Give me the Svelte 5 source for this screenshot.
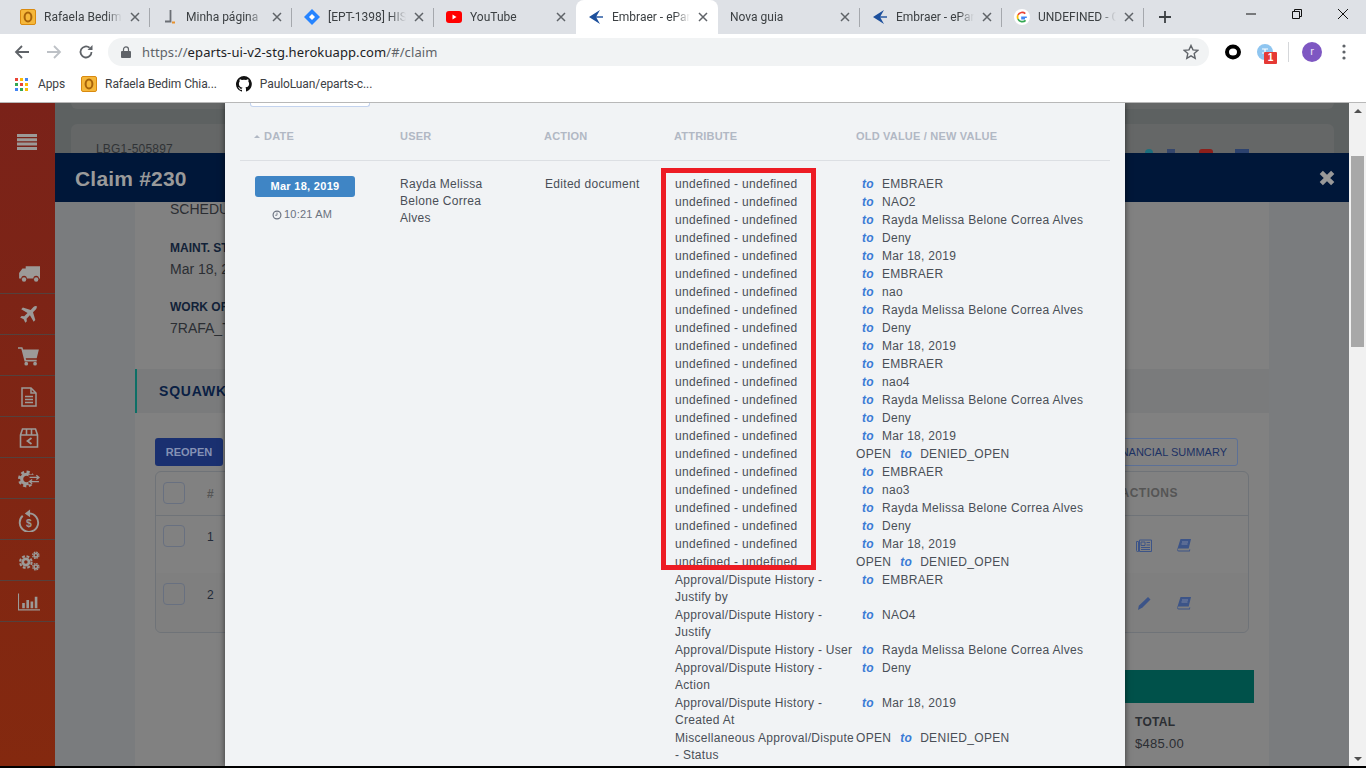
<script>
  const tabs = [
    { title: "Rafaela Bedim Chiarelli", icon: "outlook" },
    { title: "Minha página", icon: "j" },
    { title: "[EPT-1398] HISTORY", icon: "jira" },
    { title: "YouTube", icon: "yt" },
    { title: "Embraer - eParts", icon: "emb", active: true },
    { title: "Nova guia", icon: "" },
    { title: "Embraer - eParts", icon: "emb" },
    { title: "UNDEFINED - Google", icon: "g" },
  ];

  const rayda = "Rayda Melissa Belone Correa Alves";
  const und = "undefined - undefined";
  const denied = { attr: und, old: "OPEN", val: "DENIED_OPEN" };

  function group(second) {
    return [
      { attr: und, val: "EMBRAER" },
      { attr: und, val: second },
      { attr: und, val: rayda },
      { attr: und, val: "Deny" },
      { attr: und, val: "Mar 18, 2019" },
    ];
  }

  const changes = [
    ...group("NAO2"),
    ...group("nao"),
    ...group("nao4"),
    denied,
    ...group("nao3"),
    denied,
    { attr: "Approval/Dispute History - Justify by", val: "EMBRAER" },
    { attr: "Approval/Dispute History - Justify", val: "NAO4" },
    { attr: "Approval/Dispute History - User", val: rayda },
    { attr: "Approval/Dispute History - Action", val: "Deny" },
    { attr: "Approval/Dispute History - Created At", val: "Mar 18, 2019" },
    { attr: "Miscellaneous Approval/Dispute - Status", old: "OPEN", val: "DENIED_OPEN" },
  ];

  const apps = ["#ea4335", "#fbbc05", "#4285f4", "#34a853", "#ea4335", "#fbbc05", "#4285f4", "#34a853", "#fbbc05"];
</script>

{#snippet favicon(name)}
  {#if name === "outlook"}
    <svg class="fav" viewBox="0 0 16 16"><rect x="0.5" y="0.5" width="15" height="15" rx="1.5" fill="#f5b73a" stroke="#d98a10" /><ellipse cx="8" cy="8" rx="3.4" ry="4.6" fill="none" stroke="#a8640a" stroke-width="2" /></svg>
  {:else if name === "j"}
    <svg class="fav" viewBox="0 0 16 16"><path d="M8.500 1v11.500H3" fill="none" stroke="#6b6f75" stroke-width="1.800" /><rect x="10" y="12.500" width="3" height="2" fill="#e8912d" /></svg>
  {:else if name === "jira"}
    <svg class="fav" viewBox="0 0 16 16"><path d="M8 0l8 8-8 8-8-8z" fill="#2684ff" /><path d="M8 5l3 3-3 3-3-3z" fill="#fff" /></svg>
  {:else if name === "yt"}
    <svg class="fav" viewBox="0 0 16 16"><rect y="2" width="16" height="12" rx="3" fill="#f00" /><path d="M6.500 5.500l4 2.500-4 2.500z" fill="#fff" /></svg>
  {:else if name === "emb"}
    <svg class="fav" viewBox="0 0 16 16"><path d="M12 1L1 8l11 7-4-7z" fill="#1c4f9c" /><path d="M6 7.300h9v1.400H6z" fill="#1c4f9c" /></svg>
  {:else if name === "g"}
    <svg class="fav" viewBox="0 0 16 16"><circle cx="8" cy="8" r="8" fill="#fff" /><path d="M12.800 8.200H8v1.600h3" fill="none" stroke="#4285f4" stroke-width="1.600" /><path d="M11.300 4.600A4.800 4.800 0 0 0 4 5.900" fill="none" stroke="#ea4335" stroke-width="1.700" /><path d="M4 5.900a4.800 4.800 0 0 0 0 4.200" fill="none" stroke="#fbbc05" stroke-width="1.700" /><path d="M4 10.100a4.800 4.800 0 0 0 7.600 1.200" fill="none" stroke="#34a853" stroke-width="1.700" /></svg>
  {/if}
{/snippet}

{#snippet book()}
  <svg viewBox="0 0 14 13"><path d="M3.500 0H14l-2.300 9.500H1.800a1 1 0 0 0 0 2h10.400l.3-1.300.8.300-.5 2H1.800C.5 12.500 0 11.500.3 10.300z" fill="#3c5488" /><path d="M5 3h6M4.500 5h6" stroke="#8a93a8" stroke-width=".8" /></svg>
{/snippet}

<div class="screen">
  <header class="browser">
    <div class="tabstrip">
      <div class="tabs">
        {#each tabs as tab, i}
          <div class="tab" class:active={tab.active} class:nosep={tab.active || tabs[i + 1]?.active || i === 3}>
            {#if tab.icon}{@render favicon(tab.icon)}{/if}
            <span class="tab-title">{tab.title}</span>
            <svg class="tab-x" viewBox="0 0 10 10"><path d="M1 1l8 8M9 1L1 9" stroke="#5f6368" stroke-width="1.500" /></svg>
          </div>
        {/each}
      </div>
      <svg class="newtab" viewBox="0 0 12 12"><path d="M6 0v12M0 6h12" stroke="#3c4043" stroke-width="1.800" /></svg>
      <div class="winctl">
        <svg viewBox="0 0 10 10"><path d="M0 5h10" stroke="#111" /></svg>
        <svg viewBox="0 0 10 10"><path d="M.5 2.500h7v7h-7zM2.500 2.500v-2h7v7h-2" fill="none" stroke="#111" /></svg>
        <svg viewBox="0 0 10 10"><path d="M0 0l10 10M10 0L0 10" stroke="#111" /></svg>
      </div>
    </div>

    <div class="toolbar">
      <svg class="nav" viewBox="0 0 16 16"><path d="M15 8H2M8 2L2 8l6 6" fill="none" stroke="#5f6368" stroke-width="1.800" /></svg>
      <svg class="nav" viewBox="0 0 16 16"><path d="M1 8h13M8 2l6 6-6 6" fill="none" stroke="#bdc1c6" stroke-width="1.800" /></svg>
      <svg class="nav" viewBox="0 0 16 16"><path d="M13.500 8A5.500 5.500 0 1 1 11.600 3.800" fill="none" stroke="#5f6368" stroke-width="1.800" /><path d="M14.500 1v5h-5z" fill="#5f6368" /></svg>
      <div class="omnibox">
        <svg class="lock" viewBox="0 0 10 12"><path d="M2.500 5V3.400a2.500 2.500 0 0 1 5 0V5" fill="none" stroke="#5f6368" stroke-width="1.200" /><rect y="5" width="10" height="7" rx="1" fill="#5f6368" /></svg>
        <span class="url"><span>https://</span><b>eparts-ui-v2-stg.herokuapp.com</b><span>/#/claim</span></span>
        <svg class="star" viewBox="0 0 16 16"><path d="M8 1.500l2 4.400 4.700.5-3.500 3.200 1 4.700L8 11.900l-4.200 2.400 1-4.700L1.300 6.400 6 5.900z" fill="none" stroke="#5f6368" stroke-width="1.400" /></svg>
      </div>
      <div class="ext">
        <svg class="ring" viewBox="0 0 16 16"><ellipse cx="8" cy="8" rx="6" ry="5.500" fill="none" stroke="#000" stroke-width="4" /></svg>
        <div class="tr-ext">
          <svg viewBox="0 0 16 16"><circle cx="8" cy="8" r="8" fill="#8ec5f0" /><path d="M5 5h6M8 5v7M5 9h6" stroke="#fff" stroke-width="1.200" /></svg>
          <span class="ext-badge">1</span>
        </div>
        <i class="ext-sep"></i>
        <span class="avatar">r</span>
        <svg class="kebab" viewBox="0 0 4 16"><circle cx="2" cy="2" r="1.600" /><circle cx="2" cy="8" r="1.600" /><circle cx="2" cy="14" r="1.600" /></svg>
      </div>
    </div>

    <div class="bookmarks">
      <span class="bm">
        <span class="apps">{#each apps as c}<i style:background={c}></i>{/each}</span>
        Apps
      </span>
      <span class="bm bm2">{@render favicon("outlook")} Rafaela Bedim Chia...</span>
      <span class="bm bm3">
        <svg class="fav" viewBox="0 0 16 16"><path d="M8 0a8 8 0 0 0-2.500 15.600c.4.100.5-.2.500-.4v-1.400c-2.200.5-2.700-1-2.700-1-.4-.9-.9-1.200-.9-1.200-.7-.5.100-.5.100-.5.800.1 1.200.8 1.200.8.700 1.200 1.900.9 2.300.7.100-.5.300-.9.500-1.100-1.800-.2-3.600-.9-3.600-4 0-.9.300-1.600.8-2.100-.1-.2-.4-1 .1-2.100 0 0 .7-.2 2.200.8a7.600 7.600 0 0 1 4 0c1.500-1 2.200-.8 2.200-.8.500 1.100.2 1.900.1 2.100.5.600.8 1.300.8 2.100 0 3.100-1.900 3.700-3.700 3.900.3.300.6.800.6 1.500v2.200c0 .2.100.5.600.4A8 8 0 0 0 8 0z" fill="#111" /></svg>
        PauloLuan/eparts-c...
      </span>
    </div>
  </header>

  <div class="page">
    <aside class="sidebar">
      <div class="side-top">
        <svg viewBox="0 0 20 16"><path d="M0 0h20v3H0zM0 4.300h20v3H0zM0 8.600h20v3H0zM0 13h20v3H0z" /></svg>
      </div>
      <div class="side-item">
        <svg viewBox="0 0 20 16"><path d="M7 1h13v11h-1a2.500 2.500 0 0 0-5 0H8a2.500 2.500 0 0 0-5 0H1V7l3-4h3z" /><circle cx="5.500" cy="13" r="2" /><circle cx="16.500" cy="13" r="2" /></svg>
      </div>
      <div class="side-item">
        <svg viewBox="0 0 18 18"><path d="M16.500 1.500c-1-1-2.500-.6-3.500.4L10.500 4.400 3.500 2.300 2 3.800l5.700 3.400-3 3-2.300-.3L1 11.300l3.200 1.500L5.700 16l1.400-1.400-.3-2.300 3-3 3.400 5.700 1.500-1.500-2.100-7 2.500-2.500c1-1 1.400-2.600.4-3.500z" /></svg>
      </div>
      <div class="side-item">
        <svg viewBox="0 0 20 18"><path d="M0 1h4l.7 2H19l-2 8H7l.4 1.500H17V14H6L3 2.500H0z" /><circle cx="7.500" cy="16" r="1.700" /><circle cx="15.500" cy="16" r="1.700" /></svg>
      </div>
      <div class="side-item">
        <svg viewBox="0 0 16 20"><path d="M1 1h9l5 5v13H1z" fill="none" stroke-width="1.500" /><path d="M10 1v5h5M4 9.500h8M4 12.500h8M4 15.500h8" fill="none" stroke-width="1.500" /></svg>
      </div>
      <div class="side-item">
        <svg viewBox="0 0 19 20"><path d="M1 7l2-6h13l2 6v12H1zM1 7h17M7 1v6M12 1v6" fill="none" stroke-width="1.600" /><path d="M12 10l-4 3 4 3" fill="none" stroke-width="1.800" /></svg>
      </div>
      <div class="side-item">
        <svg viewBox="0 0 21 18"><circle cx="8" cy="9" r="4.500" fill="none" stroke-width="3" /><circle cx="8" cy="9" r="6.800" fill="none" stroke-width="2.400" stroke-dasharray="3 2.340" /><rect x="10" y="5" width="11" height="9" fill="#7f2717" /><path d="M11 7.500h9M17.500 5.500l2.500 2-2.500 2M20 11.500h-9M13.500 9.500l-2.500 2 2.500 2" fill="none" stroke-width="1.300" /></svg>
      </div>
      <div class="side-item">
        <svg class="tall" viewBox="0 0 20 22"><path d="M4 6.500a8.800 8.800 0 1 0 6-2.300" fill="none" stroke-width="1.800" /><path d="M11 .5v7.500L6 4.200z" /><text x="10" y="17" text-anchor="middle" class="dollar">$</text></svg>
      </div>
      <div class="side-item">
        <svg viewBox="0 0 21 19"><circle cx="7.500" cy="10.500" r="3" fill="none" stroke-width="2.600" /><circle cx="7.500" cy="10.500" r="5.500" fill="none" stroke-width="2" stroke-dasharray="2.700 1.620" /><circle cx="17" cy="4" r="1.700" fill="none" stroke-width="1.500" /><circle cx="17" cy="4" r="3" fill="none" stroke-width="1.200" stroke-dasharray="1.600 .75" /><circle cx="17" cy="15" r="1.700" fill="none" stroke-width="1.500" /><circle cx="17" cy="15" r="3" fill="none" stroke-width="1.200" stroke-dasharray="1.600 .75" /></svg>
      </div>
      <div class="side-item">
        <svg viewBox="0 0 21 16"><path d="M.5 0v15.500H21" fill="none" stroke-width="1" /><path d="M4 9h2.500v5H4zM8 6h2.500v8H8zM12 7.500h2.500V14H12zM16 3h2.500v11H16z" /></svg>
      </div>
    </aside>

    <main class="app">
      <div class="card card-a"></div>
      <div class="card card-b">
        <span>LBG1-505897</span>
        <div class="tools">
          <i class="tool t1"></i>
          <i class="tool t2"></i>
          <i class="tool t3"></i>
          <i class="tool t4"></i>
        </div>
      </div>

      <section class="claim">
        <div class="claim-head">
          <h1>Claim #230</h1>
          <svg viewBox="0 0 14 14"><path d="M2 2l10 10M12 2L2 12" stroke="#999" stroke-width="4" /></svg>
        </div>
        <div class="claim-body">
          <div class="claim-inner">
            <div class="fields">
              <p class="status">SCHEDULED</p>
              <p class="lab">MAINT. START</p>
              <p class="val">Mar 18, 2019</p>
              <p class="lab">WORK ORDER</p>
              <p class="val">7RAFA_TEST</p>
            </div>
            <div class="squawk"><b>SQUAWKS</b></div>
            <div class="btns">
              <span class="reopen">REOPEN</span>
              <span class="finsum">FINANCIAL SUMMARY</span>
            </div>
            <div class="sq-table">
              <div class="sq-row sq-hd"><i class="cb"></i><span class="num">#</span><span class="act">ACTIONS</span></div>
              <div class="sq-row sq-1">
                <i class="cb"></i><span class="num">1</span>
                <span class="acts">
                  <svg viewBox="0 0 16 13"><path d="M.5 2.500h2v10h-1a1 1 0 0 1-1-1zM3.500 1h12v11.500h-12zM5 3h4v3.500H5zM10.500 3.500H14M10.500 6H14M5 8.500h9M5 10.500h9" fill="none" stroke="#3c5488" /></svg>
                  {@render book()}
                </span>
              </div>
              <div class="sq-row sq-2">
                <i class="cb"></i><span class="num">2</span>
                <span class="acts">
                  <svg viewBox="0 0 16 13"><path d="M12 0l2.500 2.500-8 8L2 13l.8-4.300z" fill="#3c5488" /></svg>
                  {@render book()}
                </span>
              </div>
            </div>
            <div class="teal"></div>
            <div class="total"><b>TOTAL</b><span>$485.00</span></div>
          </div>
        </div>
      </section>
    </main>

    <div class="scrollbar">
      <i class="up"></i>
      <i class="thumb"></i>
      <i class="down"></i>
    </div>

    <section class="history">
      <div class="export"></div>
      <div class="h-head">
        <span class="h-date"><i class="sort"></i>DATE</span>
        <span>USER</span>
        <span>ACTION</span>
        <span>ATTRIBUTE</span>
        <span>OLD VALUE / NEW VALUE</span>
      </div>
      <div class="h-row">
        <div class="when">
          <span class="badge">Mar 18, 2019</span>
          <span class="time">
            <svg viewBox="0 0 12 12"><circle cx="6" cy="6" r="4.700" fill="none" stroke="#6b7280" stroke-width="1.400" /><path d="M6 3v3.300H3.800" fill="none" stroke="#6b7280" /></svg>
            10:21 AM
          </span>
        </div>
        <div class="who">Rayda Melissa Belone Correa Alves</div>
        <div>Edited document</div>
        <div class="changes">
          {#each changes as c}
            <div class="attr">{c.attr}</div>
            <div class="change" class:has-old={c.old}>
              {#if c.old}<span>{c.old}</span>{/if}
              <em>to</em>
              <span>{c.val}</span>
            </div>
          {/each}
        </div>
      </div>
      <div class="redbox"></div>
    </section>
  </div>
  <div class="taskbar"></div>
</div>

<style>
  :global(body) {
    margin: 0;
    overflow: hidden;
  }

  .screen {
    width: 1366px;
    height: 768px;
    display: flex;
    flex-direction: column;
    overflow: hidden;
    font-family: "Liberation Sans", Arial, sans-serif;
  }

  /* browser chrome */
  .browser {
    font-family: Roboto, "Noto Sans", sans-serif;
    background: #fff;
    border-bottom: 1px solid #b8b8b8;
    color: #3c4043;
  }

  .tabstrip {
    height: 34px;
    background: #dee1e6;
    display: flex;
    align-items: flex-end;
    padding-left: 8px;
    position: relative;
  }

  .tabs {
    display: flex;
    height: 34px;
  }

  .tab {
    width: 142px;
    box-sizing: border-box;
    display: flex;
    align-items: center;
    gap: 8px;
    padding: 0 10px 0 12px;
    font-size: 12px;
    position: relative;
  }

  .tab::after {
    content: "";
    position: absolute;
    right: 0;
    top: 8px;
    height: 19px;
    width: 1px;
    background: #a5a8ad;
  }

  .tab.nosep::after {
    display: none;
  }

  .tab.active {
    background: #fff;
    border-radius: 8px 8px 0 0;
  }

  .fav {
    width: 16px;
    height: 16px;
    flex: none;
  }

  .tab-title {
    flex: 1;
    white-space: nowrap;
    overflow: hidden;
    -webkit-mask-image: linear-gradient(90deg, #000 80%, transparent);
    mask-image: linear-gradient(90deg, #000 80%, transparent);
  }

  .tab-x {
    width: 10px;
    height: 10px;
    flex: none;
  }

  .newtab {
    width: 12px;
    height: 12px;
    margin: 0 0 11px 15px;
  }

  .winctl {
    margin-left: auto;
    display: flex;
    gap: 36px;
    align-self: flex-start;
    padding: 9px 18px 0 0;
  }

  .winctl svg {
    width: 10px;
    height: 10px;
  }

  .toolbar {
    height: 36px;
    display: flex;
    align-items: center;
    padding-left: 14px;
    gap: 16px;
  }

  .nav {
    width: 16px;
    height: 16px;
  }

  .omnibox {
    width: 1101px;
    height: 28px;
    margin-left: -2px;
    border-radius: 14px;
    background: #f1f3f4;
    display: flex;
    align-items: center;
    padding: 0 10px 0 13px;
    box-sizing: border-box;
    font-family: "Noto Sans", sans-serif;
    font-size: 13px;
    letter-spacing: .1px;
  }

  .lock {
    width: 10px;
    height: 12px;
  }

  .url {
    margin-left: 11px;
    flex: 1;
    color: #5f6368;
    white-space: nowrap;
  }

  .url b {
    font-weight: 400;
    color: #202124;
  }

  .star {
    width: 16px;
    height: 16px;
  }

  .ext {
    display: flex;
    align-items: center;
  }

  .ring {
    width: 16px;
    height: 16px;
  }

  .tr-ext {
    position: relative;
    width: 16px;
    height: 16px;
    margin-left: 16px;
  }

  .tr-ext svg {
    width: 16px;
    height: 16px;
    display: block;
  }

  .ext-badge {
    position: absolute;
    left: 7px;
    top: 8px;
    width: 13px;
    height: 12px;
    background: #e53935;
    color: #fff;
    border-radius: 1px;
    font: bold 10px/12px "Liberation Sans", sans-serif;
    text-align: center;
  }

  .ext-sep {
    width: 1px;
    height: 20px;
    background: #d5d7da;
    margin-left: 15px;
  }

  .avatar {
    width: 20px;
    height: 20px;
    border-radius: 50%;
    margin-left: 13px;
    background: #7e57c2;
    color: #e8e0f5;
    font-size: 11px;
    line-height: 19px;
    text-align: center;
  }

  .kebab {
    width: 4px;
    height: 16px;
    margin-left: 20px;
    fill: #5f6368;
  }

  .bookmarks {
    height: 32px;
    box-sizing: border-box;
    padding: 0 0 4px 15px;
    display: flex;
    align-items: center;
    font-size: 12px;
    letter-spacing: -.1px;
  }

  .bm {
    display: flex;
    align-items: center;
    gap: 8px;
    white-space: nowrap;
  }

  .bm2 {
    margin-left: 16px;
  }

  .bm3 {
    margin-left: 19px;
  }

  .apps {
    display: grid;
    grid-template-columns: repeat(3, 3px);
    gap: 2px;
    margin-right: 2px;
  }

  .apps i {
    height: 3px;
    display: block;
  }

  /* page */
  .page {
    flex: 1;
    display: flex;
    position: relative;
    min-height: 0;
    overflow: hidden;
  }

  .sidebar {
    width: 55px;
    flex: none;
    display: flex;
    flex-direction: column;
    background: linear-gradient(180deg, #7a2219, #84290f);
  }

  .sidebar svg {
    width: 22px;
    height: 20px;
    fill: #9c9a98;
    stroke: #9c9a98;
    stroke-width: 0;
    display: block;
  }

  .sidebar svg.tall {
    height: 23px;
  }

  .dollar {
    font: bold 10px "Liberation Sans", sans-serif;
  }

  .side-top {
    height: 150px;
    box-sizing: border-box;
    padding-top: 31px;
    display: flex;
    justify-content: center;
  }

  .side-top svg {
    width: 20px;
    height: 16px;
    margin-left: -1px;
  }

  .side-item {
    height: 41px;
    box-sizing: border-box;
    border-bottom: 1px solid #54413d;
    display: flex;
    align-items: center;
    justify-content: center;
    padding: 2px 0 0 2px;
  }

  .app {
    flex: 1;
    background: #5d6161;
    position: relative;
    min-width: 0;
  }

  .card {
    margin: 0 15px 0 16px;
    background: #656767;
    border-radius: 6px;
  }

  .card-a {
    height: 6px;
    border-radius: 0 0 6px 6px;
  }

  .card-b {
    margin-top: 15px;
    height: 60px;
    color: #303336;
    font-size: 12px;
    padding: 18px 85px 0 25px;
    box-sizing: border-box;
    line-height: 14px;
    letter-spacing: .2px;
    display: flex;
  }

  .tools {
    margin-left: auto;
    padding-top: 7px;
    display: flex;
    align-items: flex-start;
  }

  .tool {
    display: block;
    height: 6px;
  }

  .t1 {
    width: 8px;
    background: #1c6f7e;
    border-radius: 4px 4px 0 0;
  }

  .t2 {
    width: 8px;
    margin-left: 14px;
    background: #34466c;
  }

  .t3 {
    width: 14px;
    margin-left: 24px;
    background: #8c1f1a;
    border-radius: 3px 3px 0 0;
  }

  .t4 {
    width: 14px;
    margin-left: 22px;
    background: #2c426e;
  }

  .claim {
    position: absolute;
    top: 50px;
    left: 0;
    right: 0;
    bottom: 0;
    display: flex;
    flex-direction: column;
  }

  .claim-head {
    height: 49px;
    box-sizing: border-box;
    flex: none;
    background: #001739;
    display: flex;
    align-items: center;
    justify-content: space-between;
    padding: 3px 14px 0 20px;
  }

  .claim-head h1 {
    margin: 0;
    font-size: 21px;
    letter-spacing: .2px;
    color: #9a9a9a;
  }

  .claim-head svg {
    width: 16px;
    height: 16px;
    margin-top: -3px;
  }

  .claim-body {
    flex: 1;
    background: #7a7c7e;
    padding: 0 80px;
    min-height: 0;
  }

  .claim-inner {
    height: 100%;
    background: #818181;
    color: #2b2e33;
    position: relative;
  }

  .fields {
    padding: 0 0 0 35px;
    height: 167px;
    font-size: 14px;
  }

  .fields p {
    margin: 0;
  }

  .fields .status {
    height: 20px;
    line-height: 14px;
  }

  .fields .lab {
    font-size: 12px;
    font-weight: 700;
    color: #122238;
    margin-top: 18px;
    line-height: 16px;
  }

  .fields .val {
    line-height: 24px;
    margin-top: 1px;
  }

  .squawk {
    height: 44px;
    box-sizing: border-box;
    border-left: 2px solid #0d6f66;
    background: #7a7b7c;
    color: #0a1f44;
    font-size: 14px;
    letter-spacing: .8px;
    line-height: 44px;
    padding-left: 22px;
  }

  .btns {
    display: flex;
    justify-content: space-between;
    padding: 25px 31px 0 20px;
    height: 33px;
  }

  .reopen {
    width: 68px;
    height: 28px;
    background: #1a3070;
    border-radius: 3px;
    color: #8592b5;
    font-size: 11px;
    font-weight: 700;
    line-height: 28px;
    text-align: center;
  }

  .finsum {
    height: 28px;
    box-sizing: border-box;
    border: 1px solid #5c7096;
    border-radius: 3px;
    color: #1d3264;
    font-size: 11px;
    line-height: 26px;
    padding: 0 10px;
  }

  .sq-table {
    margin: 0 20px;
    height: 162px;
    box-sizing: border-box;
    border: 1px solid #6f7378;
    border-radius: 6px;
    color: #222a38;
    font-size: 12px;
  }

  .sq-row {
    display: flex;
    position: relative;
    padding: 9px 0 0 7px;
    box-sizing: border-box;
  }

  .sq-hd {
    height: 44px;
    padding-top: 10px;
    border-bottom: 1px solid #6f7378;
    color: #555;
    font-weight: 700;
  }

  .sq-1 {
    height: 57px;
  }

  .sq-2 {
    height: 59px;
    padding-top: 10px;
    background: #7f7f7f;
    border-radius: 0 0 6px 6px;
  }

  .cb {
    width: 22px;
    height: 22px;
    border: 1px solid #687080;
    border-radius: 4px;
    box-sizing: border-box;
  }

  .num {
    margin-left: 22px;
    line-height: 24px;
  }

  .act {
    margin-left: auto;
    margin-right: 70px;
    letter-spacing: .5px;
    line-height: 22px;
  }

  .acts {
    margin-left: auto;
    margin-right: 56px;
    display: flex;
    gap: 24px;
    padding-top: 14px;
  }

  .acts :global(svg) {
    width: 16px;
    height: 13px;
  }

  .teal {
    position: absolute;
    left: 300px;
    right: 15px;
    top: 468px;
    height: 33px;
    background: #00514a;
  }

  .total {
    position: absolute;
    right: 30px;
    top: 513px;
    width: 104px;
    display: flex;
    flex-direction: column;
    font-size: 12px;
    gap: 7px;
    letter-spacing: .3px;
  }

  .total span {
    font-size: 13px;
  }

  .scrollbar {
    width: 17px;
    flex: none;
    background: #f1f1f1;
    position: relative;
  }

  .scrollbar i {
    position: absolute;
    display: block;
  }

  .up,
  .down {
    left: 5px;
    border-left: 4px solid transparent;
    border-right: 4px solid transparent;
  }

  .up {
    top: 6px;
    border-bottom: 4px solid #505050;
  }

  .down {
    bottom: 5px;
    border-top: 4px solid #505050;
  }

  .thumb {
    left: 2px;
    right: 2px;
    top: 53px;
    height: 191px;
    background: #a8a8a8;
  }

  /* history modal */
  .history {
    position: absolute;
    left: 225px;
    top: 0;
    bottom: 0;
    width: 900px;
    background: #f1f3f5;
    box-shadow: 0 0 6px rgba(0, 0, 0, .6);
    color: #4a4f57;
    font-size: 12px;
    letter-spacing: .3px;
    overflow: hidden;
  }

  .export {
    width: 120px;
    height: 4px;
    margin-left: 25px;
    box-sizing: border-box;
    background: #fff;
    border: 1px solid #c3d3ee;
    border-top: 0;
    border-radius: 0 0 3px 3px;
  }

  .h-head,
  .h-row {
    display: grid;
    margin: 0 15px;
    padding-left: 15px;
  }

  .h-head {
    grid-template-columns: 145px 144px 130px 182px 1fr;
    height: 54px;
    box-sizing: border-box;
    padding-top: 22px;
    line-height: 14px;
    border-bottom: 1px solid #dcdfe3;
    color: #b1b8c4;
    font-size: 11px;
    font-weight: 700;
    letter-spacing: .2px;
  }

  .sort {
    display: inline-block;
    border: 3px solid transparent;
    border-top: 0;
    border-bottom: 3px solid #b1b8c4;
    margin: 0 4px 2px -1px;
  }

  .h-row {
    grid-template-columns: 145px 145px 130px 1fr;
    padding-top: 14.5px;
    line-height: 17.5px;
  }

  .who {
    width: 110px;
    line-height: 17px;
  }

  .when {
    display: flex;
    flex-direction: column;
    align-items: flex-start;
  }

  .badge {
    width: 100px;
    height: 21px;
    margin-top: .5px;
    border-radius: 3px;
    background: #3f85c5;
    color: #fff;
    font-size: 11px;
    font-weight: 700;
    line-height: 21px;
    text-align: center;
  }

  .time {
    margin: 9px 0 0 17px;
    font-size: 11px;
    color: #6b7280;
    display: flex;
    align-items: center;
    gap: 2px;
    letter-spacing: .2px;
  }

  .time svg {
    width: 10px;
    height: 10px;
  }

  .changes {
    display: grid;
    grid-template-columns: 181px 1fr;
    grid-auto-rows: minmax(18px, auto);
  }

  .change {
    display: flex;
    gap: 9px;
    padding-left: 6px;
    align-items: flex-start;
  }

  .change.has-old {
    padding-left: 0;
  }

  .change em {
    color: #3a7bd5;
    font-weight: 700;
    margin-right: -1px;
  }

  .redbox {
    position: absolute;
    left: 436px;
    top: 65px;
    width: 155px;
    height: 402px;
    box-sizing: border-box;
    border: 5px solid #ed1c24;
  }

  .taskbar {
    height: 2px;
    flex: none;
    background: #000;
  }
</style>
